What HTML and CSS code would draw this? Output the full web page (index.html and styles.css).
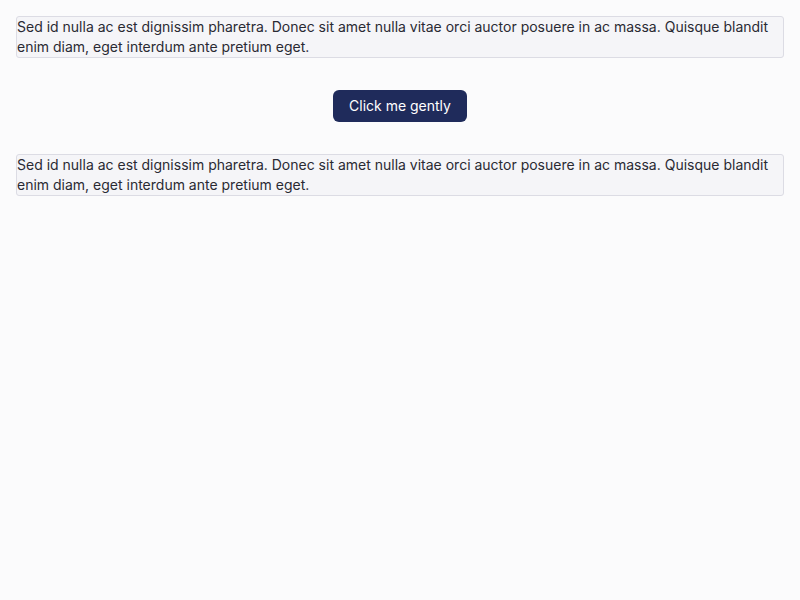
FILE: index.html
```html
<!DOCTYPE html>
<html>
<head>
<meta charset="utf-8">
<link rel="stylesheet" href="styles.css">
</head>
<body>
<main class="page">
  <p class="note">Sed id nulla ac est dignissim pharetra. Donec sit amet nulla vitae orci auctor posuere in ac massa. Quisque blandit enim diam, eget interdum ante pretium eget.</p>
  <div class="actions"><button class="btn">Click me gently</button></div>
  <p class="note">Sed id nulla ac est dignissim pharetra. Donec sit amet nulla vitae orci auctor posuere in ac massa. Quisque blandit enim diam, eget interdum ante pretium eget.</p>
</main>
</body>
</html>
```
FILE: styles.css
```css
html, body {
  margin: 0;
  background: #fbfbfc;
}
body {
  font-family: Inter, "Noto Sans", sans-serif;
  font-size: 14px;
  line-height: 20px;
  color: #2a2a33;
}
.page {
  padding: 16px;
  display: flex;
  flex-direction: column;
  gap: 32px;
}
.note {
  margin: 0;
  background: #f5f5f8;
  border: 1px solid #dcdce4;
  border-radius: 3px;
}
.actions {
  display: flex;
  justify-content: center;
}
.btn {
  font-family: Inter, "Noto Sans", sans-serif;
  font-size: 14px;
  line-height: 20px;
  height: 32px;
  padding: 6px 16px;
  border: 0;
  border-radius: 6px;
  background: #1f2b5b;
  color: #ffffff;
  cursor: pointer;
}
```
